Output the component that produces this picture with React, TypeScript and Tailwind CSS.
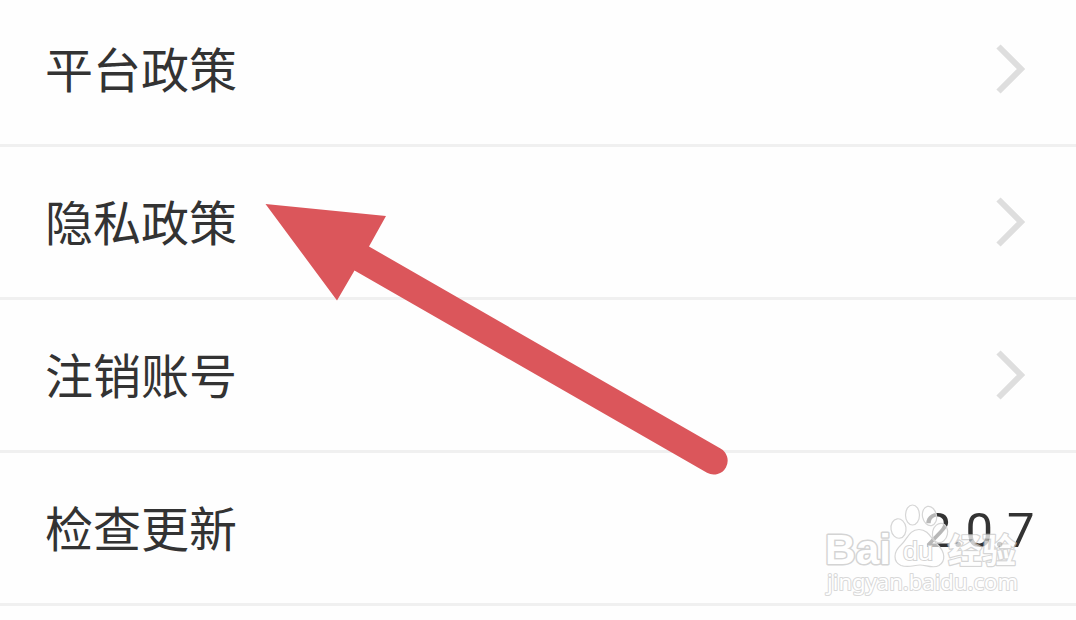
type RowProps = { label: string; value?: string };

function Chevron() {
  return (
    <svg className="mt-[48px] mr-[49px] h-[54px] w-8 shrink-0" viewBox="0 0 32 54" fill="none">
      <path d="M3.500 4.500L26 27L3.500 49.500" stroke="#dedede" strokeWidth="6" />
    </svg>
  );
}

function Row({ label, value }: RowProps) {
  return (
    <li className="flex h-[153px] items-start justify-between border-b-[3px] border-[#f0f0f0]">
      <span className="mt-[49px] ml-[45px] text-[48px] leading-[48px]">{label}</span>
      {value ? (
        <span className="mt-[54px] mr-[41px] font-[Roboto,sans-serif] text-[49px] leading-[48px] tracking-[0.5px]">{value}</span>
      ) : (
        <Chevron />
      )}
    </li>
  );
}

function Arrow() {
  return (
    <svg className="pointer-events-none absolute top-0 left-0" width="1076" height="620" viewBox="0 0 1076 620">
      <path
        d="M265.500 204L386 216L369 246.500L720.500 448.500A13.700 13.700 0 0 1 707 472.800L354.500 270.500L337 300.500Z"
        fill="#db565b"
      />
    </svg>
  );
}

function Watermark() {
  return (
    <svg className="pointer-events-none absolute top-[500px] left-[820px]" width="210" height="110" viewBox="820 500 210 110">
      <g fill="#ffffff" fillOpacity="0.65" stroke="#d6d6d6" strokeWidth="1.200">
        <ellipse cx="898.500" cy="528.500" rx="7.500" ry="9.800" transform="rotate(-8 898.500 528.500)" />
        <ellipse cx="912.500" cy="515" rx="7" ry="10" />
        <ellipse cx="929.500" cy="516" rx="7" ry="9.800" transform="rotate(-12 929.500 516)" />
        <ellipse cx="940" cy="533" rx="7.500" ry="9.800" transform="rotate(12 940 533)" />
        <path d="M919 529.500C909 529.500 907 540 901 545C893 552 893 562 901 565.500C909 568 914 565 920 565C926 565 933 569 939 565.500C946 561 945 552 938 545C931 539 929 529.500 919 529.500Z" />
      </g>
      <text x="825" y="563.500" fontSize="42" textLength="66" lengthAdjust="spacingAndGlyphs" fill="#ffffff" stroke="#d4d4d4" strokeWidth="3" strokeLinejoin="round" paintOrder="stroke" fontFamily="Liberation Sans, sans-serif" fontWeight="700">Bai</text>
      <text x="903" y="560" fontSize="26" textLength="30" lengthAdjust="spacingAndGlyphs" fill="#ffffff" stroke="#d4d4d4" strokeWidth="2" paintOrder="stroke" fontFamily="Liberation Sans, sans-serif">du</text>
      <text x="948" y="563" fontSize="34" textLength="68" lengthAdjust="spacingAndGlyphs" opacity="0.75" fill="#ffffff" stroke="#c8c8c8" strokeWidth="2.400" strokeLinejoin="round" paintOrder="stroke" fontFamily="Noto Sans CJK SC, sans-serif" fontWeight="700">经验</text>
      <text x="827" y="590" fontSize="22" textLength="191" lengthAdjust="spacingAndGlyphs" fill="#ffffff" stroke="#d8d8d8" strokeWidth="2" strokeLinejoin="round" paintOrder="stroke" fontFamily="Noto Sans, sans-serif">jingyan.baidu.com</text>
    </svg>
  );
}

export default function App() {
  return (
    <main className="relative h-[620px] w-[1076px] overflow-hidden bg-[#fefefe] font-['Noto_Sans_CJK_SC',sans-serif] text-[#333333]">
      <ul className="-mt-[6px]">
        <Row label="平台政策" />
        <Row label="隐私政策" />
        <Row label="注销账号" />
        <Row label="检查更新" value="2.0.7" />
      </ul>
      <Arrow />
      <Watermark />
    </main>
  );
}
